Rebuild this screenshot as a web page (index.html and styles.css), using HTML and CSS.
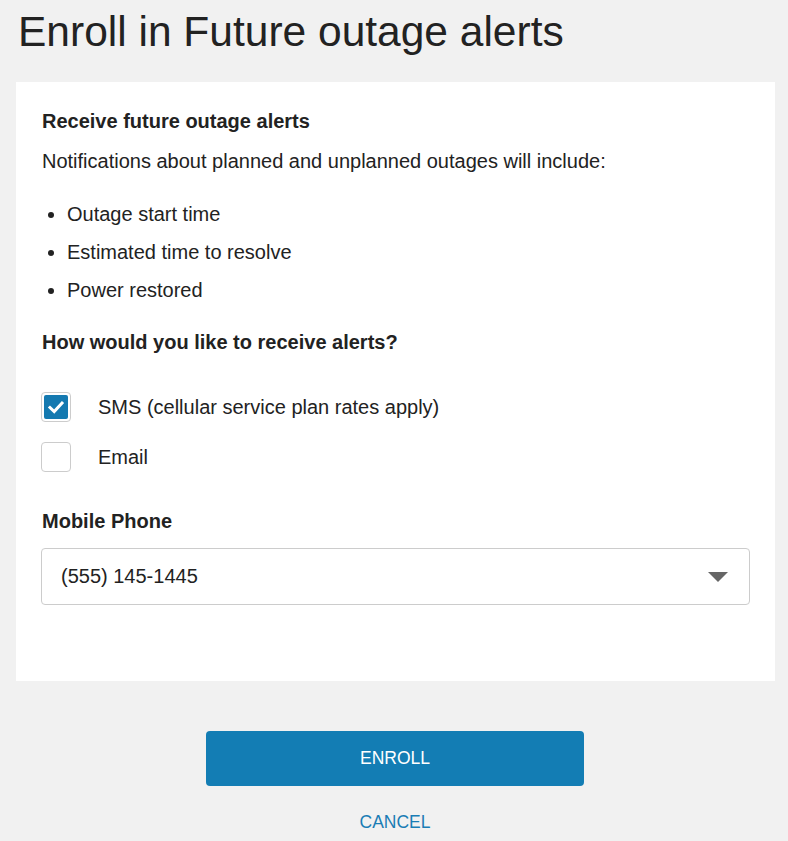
FILE: index.html
```html
<!DOCTYPE html>
<html lang="en">
<head>
<meta charset="utf-8">
<title>Enroll in Future outage alerts</title>
<link rel="stylesheet" href="styles.css">
</head>
<body>
  <h1 class="page-title">Enroll in Future outage alerts</h1>
  <section class="card">
    <h2 class="section-title">Receive future outage alerts</h2>
    <p class="intro">Notifications about planned and unplanned outages will include:</p>
    <ul class="features">
      <li>Outage start time</li>
      <li>Estimated time to resolve</li>
      <li>Power restored</li>
    </ul>
    <h2 class="section-title question">How would you like to receive alerts?</h2>
    <div class="options">
      <label class="option">
        <span class="checkbox checked">
          <svg viewBox="0 0 24 24" width="24" height="24"><path d="M6 12.5 L10.2 16.5 L18 8" fill="none" stroke="#fff" stroke-width="3" stroke-linecap="square"/></svg>
        </span>
        <span class="option-label">SMS (cellular service plan rates apply)</span>
      </label>
      <label class="option">
        <span class="checkbox"></span>
        <span class="option-label">Email</span>
      </label>
    </div>
    <h2 class="section-title phone-title">Mobile Phone</h2>
    <div class="select">
      <span class="select-value">(555) 145-1445</span>
      <span class="select-arrow"></span>
    </div>
  </section>
  <div class="actions">
    <button class="btn-primary">ENROLL</button>
    <a class="btn-link" href="#">CANCEL</a>
  </div>
</body>
</html>
```
FILE: styles.css
```css
* { box-sizing: border-box; }
html, body {
  margin: 0;
  background: #f1f1f1;
  font-family: "Liberation Sans", Arial, sans-serif;
  color: #222;
}
.page-title {
  margin: 0;
  padding: 9px 18px 27px;
  font-size: 42.5px;
  line-height: 46px;
  font-weight: normal;
  color: #222;
}
.card {
  background: #fff;
  margin-left: 16px;
  width: 759px;
  height: 599px;
  padding: 27px 26px 0 26px;
}
.section-title {
  margin: 0;
  font-size: 20px;
  line-height: 24px;
  font-weight: bold;
  color: #222;
}
.intro {
  margin: 16px 0 0;
  font-size: 20px;
  line-height: 24px;
}
.features {
  margin: 22px 0 0;
  padding-left: 25px;
  font-size: 20px;
  line-height: 24px;
}
.features li { padding: 7px 0; }
.question { margin-top: 21px; }
.options {
  margin-top: 38px;
  display: flex;
  flex-direction: column;
  gap: 20px;
}
.option {
  display: flex;
  align-items: center;
  gap: 27px;
  font-size: 20px;
  line-height: 24px;
}
.checkbox {
  width: 30px;
  height: 30px;
  border: 1px solid #ccc;
  border-radius: 4px;
  background: #fff;
  display: flex;
  align-items: center;
  justify-content: center;
  margin-left: -1px;
}
.checkbox.checked svg {
  background: #1479b0;
  border-radius: 2px;
  display: block;
}
.phone-title { margin-top: 37px; }
.select {
  margin-top: 15px;
  margin-left: -1px;
  height: 57px;
  width: 709px;
  border: 1px solid #ccc;
  border-radius: 4px;
  display: flex;
  align-items: center;
  justify-content: space-between;
  padding: 0 21px 0 19px;
  font-size: 20px;
}
.select-arrow {
  width: 0;
  height: 0;
  border-left: 10px solid transparent;
  border-right: 10px solid transparent;
  border-top: 10px solid #666;
}
.actions {
  display: flex;
  flex-direction: column;
  align-items: center;
  margin-top: 50px;
  padding-left: 2px;
}
.btn-primary {
  width: 378px;
  height: 55px;
  border: 0;
  border-radius: 4px;
  background: #137db4;
  color: #fff;
  font-family: inherit;
  font-size: 17.5px;
  cursor: pointer;
}
.btn-link {
  margin-top: 26px;
  color: #1a7db5;
  font-size: 17.5px;
  text-decoration: none;
}
```
